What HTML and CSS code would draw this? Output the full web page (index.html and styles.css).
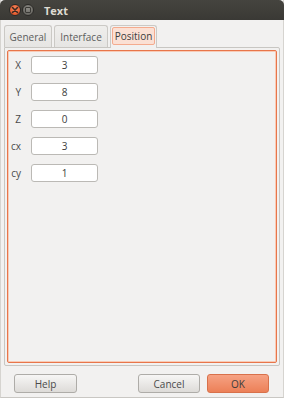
FILE: index.html
```html
<!DOCTYPE html>
<html lang="en">
<head>
  <meta charset="UTF-8">
  <title>Text</title>
  <link rel="stylesheet" href="styles.css">
</head>
<body>
  <div class="window">
    <div class="titlebar">
      <span class="wbtn close">
        <svg width="8" height="8" viewBox="0 0 8 8"><path d="M1.5 1.5 L6.5 6.5 M6.5 1.5 L1.5 6.5" stroke="#3b2a22" stroke-width="1.6" stroke-linecap="round"/></svg>
      </span>
      <span class="wbtn mini">
        <span class="mini-box"></span>
      </span>
      <span class="title">Text</span>
    </div>

    <div class="content">
      <div class="tabs">
        <div class="tab tab-general">General</div>
        <div class="tab tab-interface">Interface</div>
        <div class="tab tab-position active"><span class="tab-inner">Position</span></div>
      </div>

      <div class="notebook">
        <div class="page">
          <div class="row">
            <label class="lbl">X</label>
            <input class="entry" type="text" value="3">
          </div>
          <div class="row">
            <label class="lbl">Y</label>
            <input class="entry" type="text" value="8">
          </div>
          <div class="row">
            <label class="lbl">Z</label>
            <input class="entry" type="text" value="0">
          </div>
          <div class="row">
            <label class="lbl">cx</label>
            <input class="entry" type="text" value="3">
          </div>
          <div class="row">
            <label class="lbl">cy</label>
            <input class="entry" type="text" value="1">
          </div>
        </div>
      </div>

      <div class="actions">
        <button class="button help">Help</button>
        <div class="spacer"></div>
        <button class="button cancel">Cancel</button>
        <button class="button ok">OK</button>
      </div>
    </div>
  </div>
</body>
</html>
```

FILE: styles.css
```css
body {
  margin: 0;
  padding: 0;
  background: #f2f1f0;
  font-family: "Open Sans", "Noto Sans", sans-serif;
  font-size: 10px;
  color: #3c3c3c;
}
.window {
  width: 284px;
  height: 398px;
  box-sizing: border-box;
  background: #f2f1f0;
  border-left: 1px solid #d6d4d0;
  border-right: 1px solid #d6d4d0;
  border-bottom: 1px solid #c9c7c3;
}
.titlebar {
  height: 20px;
  margin: 0 -1px;
  display: flex;
  align-items: center;
  background: linear-gradient(#45443f, #3a3935);
  border-radius: 5px 5px 0 0;
  padding-left: 9px;
}
.wbtn {
  flex: none;
  width: 12px;
  height: 12px;
  border-radius: 50%;
  display: flex;
  align-items: center;
  justify-content: center;
  box-sizing: border-box;
}
.close {
  background: radial-gradient(circle at 50% 35%, #f7845a, #dd4b1e);
  border: 1px solid #2b2a27;
}
.mini {
  margin-left: 1px;
  background: radial-gradient(circle at 50% 35%, #8d8b85, #5c5b56);
  border: 1px solid #2b2a27;
}
.mini-box {
  width: 4px;
  height: 4px;
  border: 1px solid #3a3935;
  border-radius: 1px;
}
.title {
  margin-left: 10px;
  color: #dfdbd2;
  font-weight: bold;
  font-size: 11px;
}
.content {
  padding: 5px 3px 0 3px;
}
.tabs {
  display: flex;
  height: 22px;
  gap: 2px;
}
.tab {
  box-sizing: border-box;
  height: 22px;
  border: 1px solid #cbc9c5;
  border-bottom: none;
  border-radius: 3px 3px 0 0;
  background: linear-gradient(#efeeec, #e6e5e3);
  color: #5d5d5d;
  display: flex;
  align-items: center;
  justify-content: center;
}
.tab-general {
  width: 48px;
}
.tab-interface {
  width: 54px;
}
.tab-position {
  width: 47px;
}
.tab.active {
  background: #f2f1f0;
  color: #3c3c3c;
  height: 23px;
  padding: 1px;
  align-items: stretch;
  position: relative;
  z-index: 1;
}
.tab-inner {
  flex: 1;
  display: flex;
  align-items: center;
  justify-content: center;
  background: #fbe0d4;
  border: 1px solid #f4ab8e;
  border-radius: 2px;
  margin-bottom: 2px;
}
.notebook {
  box-sizing: border-box;
  height: 319px;
  border: 1px solid #c8c6c2;
  border-radius: 0 2px 2px 2px;
  padding: 2px;
  background: #f2f1f0;
}
.page {
  box-sizing: border-box;
  height: 100%;
  border: 1px solid #e8754a;
  box-shadow: inset 0 0 0 1px #f8cbb6;
  border-radius: 2px;
  padding: 5px 0 0 0;
  display: flex;
  flex-direction: column;
  gap: 9px;
}
.row {
  display: flex;
  align-items: center;
  height: 18px;
}
.lbl {
  width: 13px;
  text-align: right;
  margin-right: 10px;
  color: #4a4a4a;
}
.entry {
  box-sizing: border-box;
  width: 67px;
  height: 18px;
  margin: 0;
  padding: 0;
  border: 1px solid #bbb9b5;
  border-radius: 3px;
  background: #fff;
  text-align: center;
  font-family: inherit;
  font-size: 10px;
  color: #3c3c3c;
  outline: none;
}
.actions {
  display: flex;
  padding: 8px 11px 0 10px;
  gap: 7px;
}
.spacer {
  flex: 1;
}
.button {
  box-sizing: border-box;
  width: 62px;
  height: 19px;
  margin: 0;
  padding: 0;
  border: 1px solid #aeaca8;
  border-radius: 3px;
  background: linear-gradient(#f7f6f5, #dddbd8);
  font-family: inherit;
  font-size: 10px;
  color: #4a4a4a;
  cursor: pointer;
}
.button.help {
  width: 63px;
}
.button.ok {
  border-color: #d8714b;
  background: linear-gradient(#f6a283, #ec8058);
  color: #3c3c3c;
}
```
